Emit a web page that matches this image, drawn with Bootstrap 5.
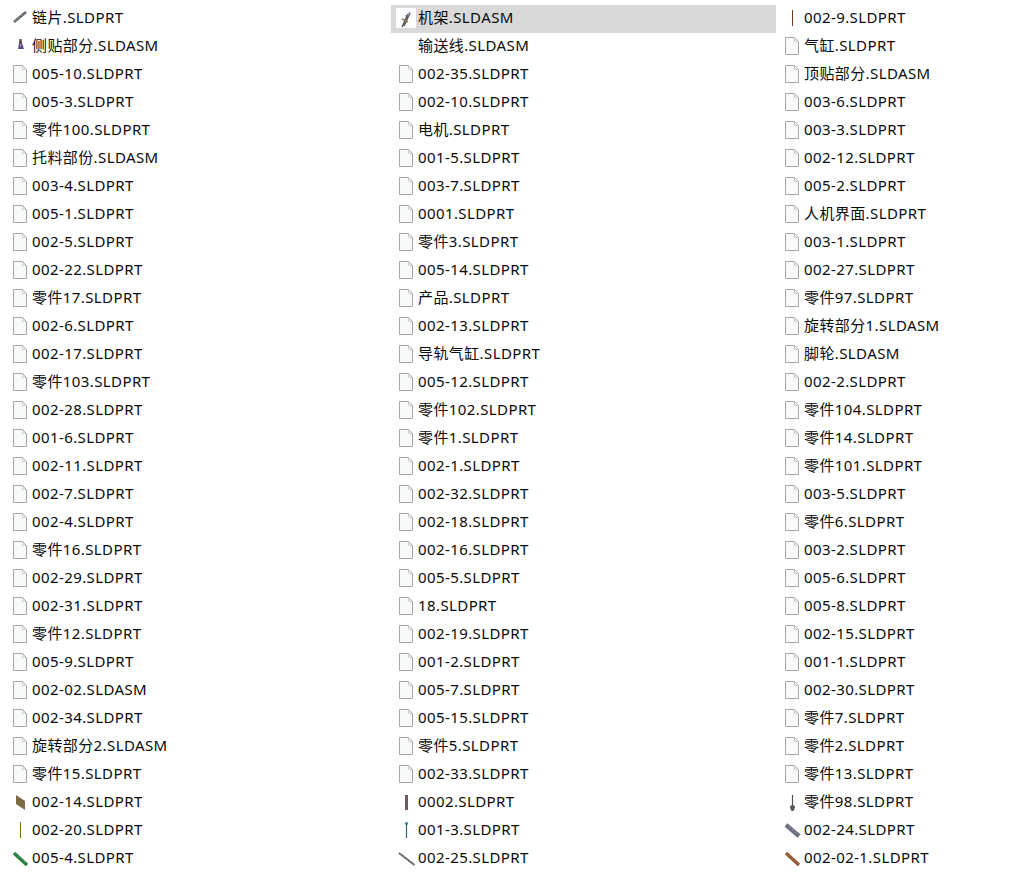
<!DOCTYPE html>
<html lang="zh">
<head>
<meta charset="utf-8">
<title>文件列表</title>
<link rel="stylesheet" href="https://cdn.jsdelivr.net/npm/bootstrap@5.3.0/dist/css/bootstrap.min.css">
<style>
html, body { background: #fff; margin: 0; height: 874px; overflow: hidden; }
.file-grid { display: grid; grid-auto-flow: column; grid-template-rows: repeat(31, 28px); grid-template-columns: 385px 385px 1fr; column-gap: 1px; padding: 5px 0 0 5px; }
.file-row { height: 28px; padding: 0 0 2px 8px; gap: 3px; font-family: "Noto Sans", "Noto Sans CJK SC", sans-serif; font-size: 15px; letter-spacing: .4px; color: #0a0a0a; white-space: nowrap; line-height: 26px; }
.file-row span { padding-bottom: 2px; }
.file-row svg { flex: 0 0 16px; width: 16px; height: 18px; overflow: visible; }
.file-on { background: #d9d9d9; }
.file-on svg { background: #fff; height: 20px; flex-basis: 20px; width: 20px; margin-left: -3px; margin-right: -1px; }
</style>
</head>
<body>
<svg width="0" height="0" class="d-none" aria-hidden="true">
<symbol id="doc" viewBox="0 0 16 18"><path d="M.5.5H9.5L13.5 4.5V17.5H.5Z" fill="#f8f9f9" stroke="#a6a6a6"/><path d="M9.5 1V4.5H13" fill="#eee" stroke="#cfcfcf"/></symbol>
</svg>
<div class="file-grid">
<div class="file-row d-flex align-items-center"><svg viewBox="0 0 16 18"><path d="M1 13L13 3" stroke="#5d6662" stroke-width="2.8"/><path d="M2 12L12 4" stroke="#9fa8a4" stroke-width="1" stroke-dasharray="2 2"/></svg><span>链片.SLDPRT</span></div>
<div class="file-row d-flex align-items-center"><svg viewBox="0 0 16 18"><path d="M6.5 2h2l.5 4h-3Z" fill="#5c4a36"/><path d="M6 6h3l2 6H5Z" fill="#5d4a90"/><path d="M7 7h1v3H7Z" fill="#b79a6a"/></svg><span>侧贴部分.SLDASM</span></div>
<div class="file-row d-flex align-items-center"><svg><use href="#doc"/></svg><span>005-10.SLDPRT</span></div>
<div class="file-row d-flex align-items-center"><svg><use href="#doc"/></svg><span>005-3.SLDPRT</span></div>
<div class="file-row d-flex align-items-center"><svg><use href="#doc"/></svg><span>零件100.SLDPRT</span></div>
<div class="file-row d-flex align-items-center"><svg><use href="#doc"/></svg><span>托料部份.SLDASM</span></div>
<div class="file-row d-flex align-items-center"><svg><use href="#doc"/></svg><span>003-4.SLDPRT</span></div>
<div class="file-row d-flex align-items-center"><svg><use href="#doc"/></svg><span>005-1.SLDPRT</span></div>
<div class="file-row d-flex align-items-center"><svg><use href="#doc"/></svg><span>002-5.SLDPRT</span></div>
<div class="file-row d-flex align-items-center"><svg><use href="#doc"/></svg><span>002-22.SLDPRT</span></div>
<div class="file-row d-flex align-items-center"><svg><use href="#doc"/></svg><span>零件17.SLDPRT</span></div>
<div class="file-row d-flex align-items-center"><svg><use href="#doc"/></svg><span>002-6.SLDPRT</span></div>
<div class="file-row d-flex align-items-center"><svg><use href="#doc"/></svg><span>002-17.SLDPRT</span></div>
<div class="file-row d-flex align-items-center"><svg><use href="#doc"/></svg><span>零件103.SLDPRT</span></div>
<div class="file-row d-flex align-items-center"><svg><use href="#doc"/></svg><span>002-28.SLDPRT</span></div>
<div class="file-row d-flex align-items-center"><svg><use href="#doc"/></svg><span>001-6.SLDPRT</span></div>
<div class="file-row d-flex align-items-center"><svg><use href="#doc"/></svg><span>002-11.SLDPRT</span></div>
<div class="file-row d-flex align-items-center"><svg><use href="#doc"/></svg><span>002-7.SLDPRT</span></div>
<div class="file-row d-flex align-items-center"><svg><use href="#doc"/></svg><span>002-4.SLDPRT</span></div>
<div class="file-row d-flex align-items-center"><svg><use href="#doc"/></svg><span>零件16.SLDPRT</span></div>
<div class="file-row d-flex align-items-center"><svg><use href="#doc"/></svg><span>002-29.SLDPRT</span></div>
<div class="file-row d-flex align-items-center"><svg><use href="#doc"/></svg><span>002-31.SLDPRT</span></div>
<div class="file-row d-flex align-items-center"><svg><use href="#doc"/></svg><span>零件12.SLDPRT</span></div>
<div class="file-row d-flex align-items-center"><svg><use href="#doc"/></svg><span>005-9.SLDPRT</span></div>
<div class="file-row d-flex align-items-center"><svg><use href="#doc"/></svg><span>002-02.SLDASM</span></div>
<div class="file-row d-flex align-items-center"><svg><use href="#doc"/></svg><span>002-34.SLDPRT</span></div>
<div class="file-row d-flex align-items-center"><svg><use href="#doc"/></svg><span>旋转部分2.SLDASM</span></div>
<div class="file-row d-flex align-items-center"><svg><use href="#doc"/></svg><span>零件15.SLDPRT</span></div>
<div class="file-row d-flex align-items-center"><svg viewBox="0 0 16 18"><path d="M3 2L12 8V17L3 11Z" fill="#7d6c43"/></svg><span>002-14.SLDPRT</span></div>
<div class="file-row d-flex align-items-center"><svg viewBox="0 0 16 18"><path d="M7.5 1V17" stroke="#6f6f10"/></svg><span>002-20.SLDPRT</span></div>
<div class="file-row d-flex align-items-center"><svg viewBox="0 0 16 18"><path d="M1 4L14 16" stroke="#2a7f3e" stroke-width="3.6"/><path d="M2 4L13 14" stroke="#58b06c" stroke-width="1" stroke-dasharray="2 2"/></svg><span>005-4.SLDPRT</span></div>

<div class="file-row file-on d-flex align-items-center"><svg viewBox="0 0 20 20"><path d="M6 19L12 6M8 18L14 5" stroke="#4f4d4a" stroke-width="1.3"/><path d="M6 11l6 3" stroke="#8d7458" stroke-width="1.4"/><path d="M9 8l4-1M13 4l1 3" stroke="#6f7a92" stroke-width="1.2"/></svg><span>机架.SLDASM</span></div>
<div class="file-row d-flex align-items-center"><svg viewBox="0 0 16 18"></svg><span>输送线.SLDASM</span></div>
<div class="file-row d-flex align-items-center"><svg><use href="#doc"/></svg><span>002-35.SLDPRT</span></div>
<div class="file-row d-flex align-items-center"><svg><use href="#doc"/></svg><span>002-10.SLDPRT</span></div>
<div class="file-row d-flex align-items-center"><svg><use href="#doc"/></svg><span>电机.SLDPRT</span></div>
<div class="file-row d-flex align-items-center"><svg><use href="#doc"/></svg><span>001-5.SLDPRT</span></div>
<div class="file-row d-flex align-items-center"><svg><use href="#doc"/></svg><span>003-7.SLDPRT</span></div>
<div class="file-row d-flex align-items-center"><svg><use href="#doc"/></svg><span>0001.SLDPRT</span></div>
<div class="file-row d-flex align-items-center"><svg><use href="#doc"/></svg><span>零件3.SLDPRT</span></div>
<div class="file-row d-flex align-items-center"><svg><use href="#doc"/></svg><span>005-14.SLDPRT</span></div>
<div class="file-row d-flex align-items-center"><svg><use href="#doc"/></svg><span>产品.SLDPRT</span></div>
<div class="file-row d-flex align-items-center"><svg><use href="#doc"/></svg><span>002-13.SLDPRT</span></div>
<div class="file-row d-flex align-items-center"><svg><use href="#doc"/></svg><span>导轨气缸.SLDPRT</span></div>
<div class="file-row d-flex align-items-center"><svg><use href="#doc"/></svg><span>005-12.SLDPRT</span></div>
<div class="file-row d-flex align-items-center"><svg><use href="#doc"/></svg><span>零件102.SLDPRT</span></div>
<div class="file-row d-flex align-items-center"><svg><use href="#doc"/></svg><span>零件1.SLDPRT</span></div>
<div class="file-row d-flex align-items-center"><svg><use href="#doc"/></svg><span>002-1.SLDPRT</span></div>
<div class="file-row d-flex align-items-center"><svg><use href="#doc"/></svg><span>002-32.SLDPRT</span></div>
<div class="file-row d-flex align-items-center"><svg><use href="#doc"/></svg><span>002-18.SLDPRT</span></div>
<div class="file-row d-flex align-items-center"><svg><use href="#doc"/></svg><span>002-16.SLDPRT</span></div>
<div class="file-row d-flex align-items-center"><svg><use href="#doc"/></svg><span>005-5.SLDPRT</span></div>
<div class="file-row d-flex align-items-center"><svg><use href="#doc"/></svg><span>18.SLDPRT</span></div>
<div class="file-row d-flex align-items-center"><svg><use href="#doc"/></svg><span>002-19.SLDPRT</span></div>
<div class="file-row d-flex align-items-center"><svg><use href="#doc"/></svg><span>001-2.SLDPRT</span></div>
<div class="file-row d-flex align-items-center"><svg><use href="#doc"/></svg><span>005-7.SLDPRT</span></div>
<div class="file-row d-flex align-items-center"><svg><use href="#doc"/></svg><span>005-15.SLDPRT</span></div>
<div class="file-row d-flex align-items-center"><svg><use href="#doc"/></svg><span>零件5.SLDPRT</span></div>
<div class="file-row d-flex align-items-center"><svg><use href="#doc"/></svg><span>002-33.SLDPRT</span></div>
<div class="file-row d-flex align-items-center"><svg viewBox="0 0 16 18"><path d="M6 2H9V17H6Z" fill="#6c5a5e"/></svg><span>0002.SLDPRT</span></div>
<div class="file-row d-flex align-items-center"><svg viewBox="0 0 16 18"><path d="M7.5 3V17" stroke="#2e6e6a" stroke-width="1.2"/><circle cx="7.5" cy="2.5" r="1.6" fill="#2f8c86"/></svg><span>001-3.SLDPRT</span></div>
<div class="file-row d-flex align-items-center"><svg viewBox="0 0 16 18"><path d="M0 4L15.5 16" stroke="#666" stroke-width="2.2"/><path d="M1 4.500L15 15.500" stroke="#aaa" stroke-width=".8" stroke-dasharray="2 2"/></svg><span>002-25.SLDPRT</span></div>

<div class="file-row d-flex align-items-center"><svg viewBox="0 0 16 18"><path d="M7.500 1V17" stroke="#6d3c1c"/></svg><span>002-9.SLDPRT</span></div>
<div class="file-row d-flex align-items-center"><svg><use href="#doc"/></svg><span>气缸.SLDPRT</span></div>
<div class="file-row d-flex align-items-center"><svg><use href="#doc"/></svg><span>顶贴部分.SLDASM</span></div>
<div class="file-row d-flex align-items-center"><svg><use href="#doc"/></svg><span>003-6.SLDPRT</span></div>
<div class="file-row d-flex align-items-center"><svg><use href="#doc"/></svg><span>003-3.SLDPRT</span></div>
<div class="file-row d-flex align-items-center"><svg><use href="#doc"/></svg><span>002-12.SLDPRT</span></div>
<div class="file-row d-flex align-items-center"><svg><use href="#doc"/></svg><span>005-2.SLDPRT</span></div>
<div class="file-row d-flex align-items-center"><svg><use href="#doc"/></svg><span>人机界面.SLDPRT</span></div>
<div class="file-row d-flex align-items-center"><svg><use href="#doc"/></svg><span>003-1.SLDPRT</span></div>
<div class="file-row d-flex align-items-center"><svg><use href="#doc"/></svg><span>002-27.SLDPRT</span></div>
<div class="file-row d-flex align-items-center"><svg><use href="#doc"/></svg><span>零件97.SLDPRT</span></div>
<div class="file-row d-flex align-items-center"><svg><use href="#doc"/></svg><span>旋转部分1.SLDASM</span></div>
<div class="file-row d-flex align-items-center"><svg><use href="#doc"/></svg><span>脚轮.SLDASM</span></div>
<div class="file-row d-flex align-items-center"><svg><use href="#doc"/></svg><span>002-2.SLDPRT</span></div>
<div class="file-row d-flex align-items-center"><svg><use href="#doc"/></svg><span>零件104.SLDPRT</span></div>
<div class="file-row d-flex align-items-center"><svg><use href="#doc"/></svg><span>零件14.SLDPRT</span></div>
<div class="file-row d-flex align-items-center"><svg><use href="#doc"/></svg><span>零件101.SLDPRT</span></div>
<div class="file-row d-flex align-items-center"><svg><use href="#doc"/></svg><span>003-5.SLDPRT</span></div>
<div class="file-row d-flex align-items-center"><svg><use href="#doc"/></svg><span>零件6.SLDPRT</span></div>
<div class="file-row d-flex align-items-center"><svg><use href="#doc"/></svg><span>003-2.SLDPRT</span></div>
<div class="file-row d-flex align-items-center"><svg><use href="#doc"/></svg><span>005-6.SLDPRT</span></div>
<div class="file-row d-flex align-items-center"><svg><use href="#doc"/></svg><span>005-8.SLDPRT</span></div>
<div class="file-row d-flex align-items-center"><svg><use href="#doc"/></svg><span>002-15.SLDPRT</span></div>
<div class="file-row d-flex align-items-center"><svg><use href="#doc"/></svg><span>001-1.SLDPRT</span></div>
<div class="file-row d-flex align-items-center"><svg><use href="#doc"/></svg><span>002-30.SLDPRT</span></div>
<div class="file-row d-flex align-items-center"><svg><use href="#doc"/></svg><span>零件7.SLDPRT</span></div>
<div class="file-row d-flex align-items-center"><svg><use href="#doc"/></svg><span>零件2.SLDPRT</span></div>
<div class="file-row d-flex align-items-center"><svg><use href="#doc"/></svg><span>零件13.SLDPRT</span></div>
<div class="file-row d-flex align-items-center"><svg viewBox="0 0 16 18"><path d="M7.500 2V13" stroke="#555" stroke-width="1.2"/><path d="M5 14.500a2.500 2.500 0 0 1 5 0L8.500 18h-2Z" fill="#555"/></svg><span>零件98.SLDPRT</span></div>
<div class="file-row d-flex align-items-center"><svg viewBox="0 0 16 18"><path d="M1 4L14 15" stroke="#6c7080" stroke-width="4.400"/><path d="M1 3L13 13" stroke="#9498a6" stroke-width="1" stroke-dasharray="2 2"/></svg><span>002-24.SLDPRT</span></div>
<div class="file-row d-flex align-items-center"><svg viewBox="0 0 16 18"><path d="M1 4L14 16" stroke="#8c5a34" stroke-width="3.600"/><path d="M1 3.500L14 15" stroke="#b07c50" stroke-width="1" stroke-dasharray="2 2"/></svg><span>002-02-1.SLDPRT</span></div>
</div>
</body>
</html>
